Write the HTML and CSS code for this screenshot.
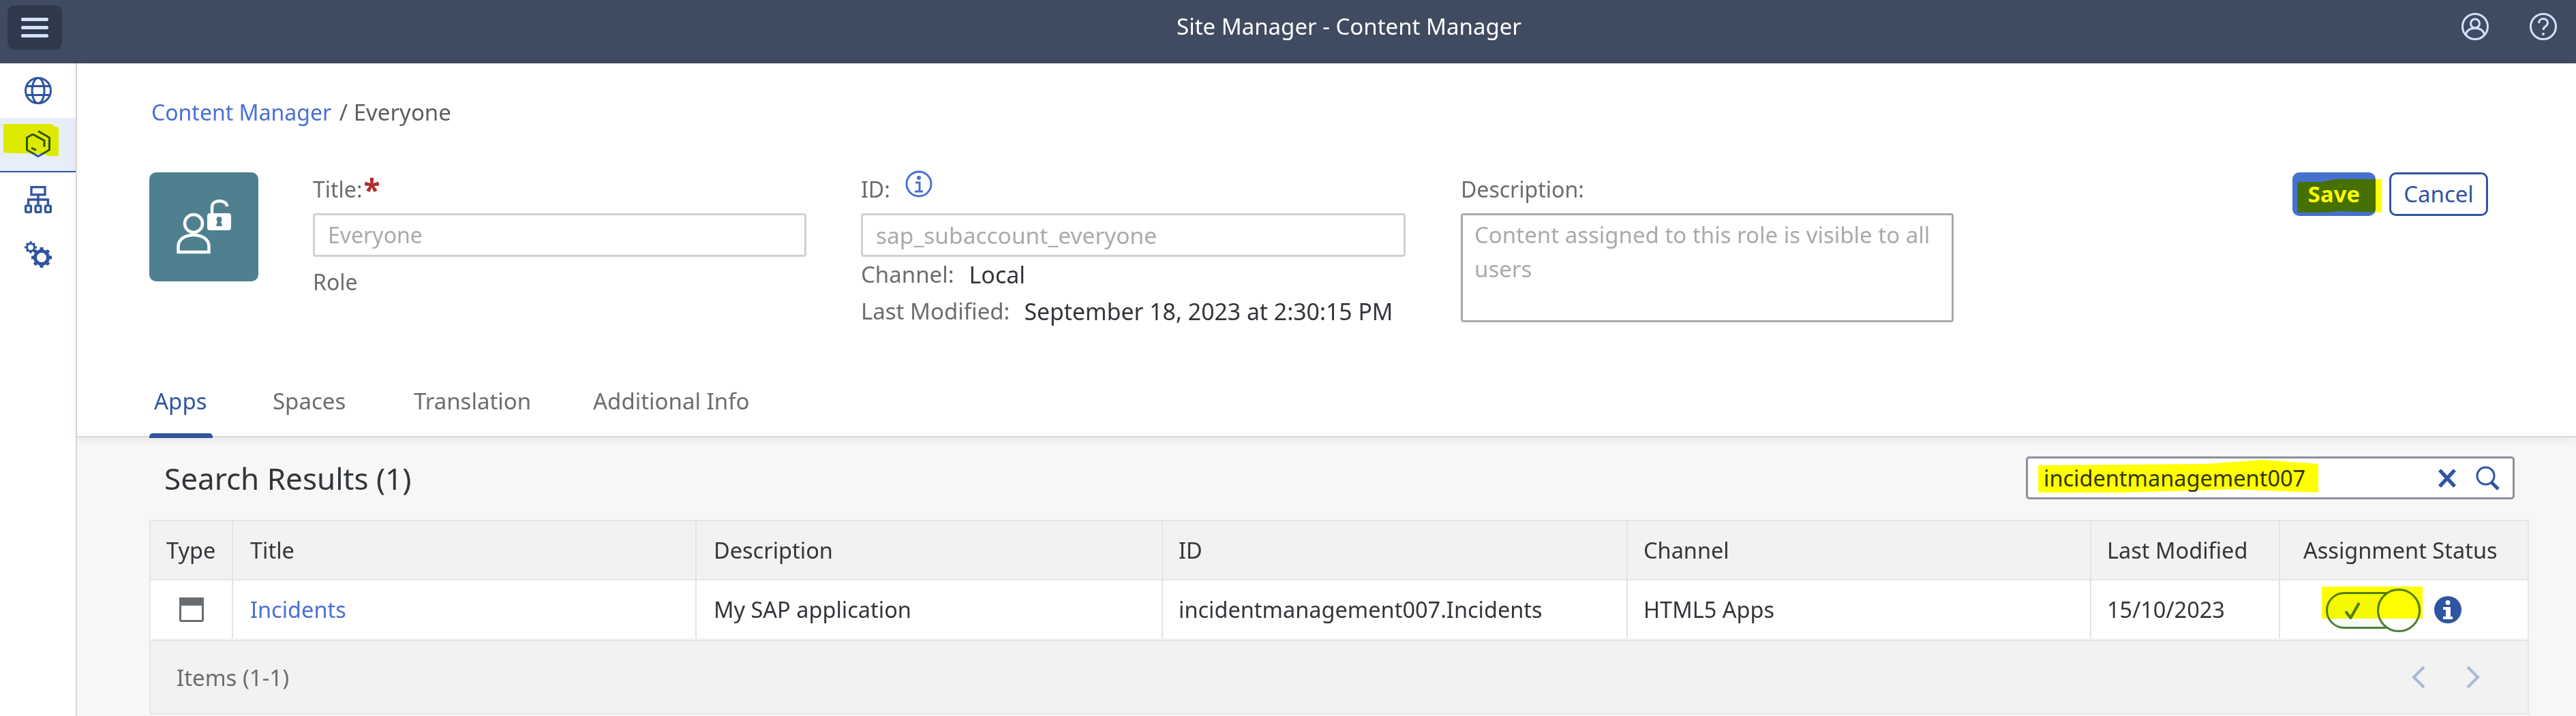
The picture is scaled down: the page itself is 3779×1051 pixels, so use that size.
FILE: index.html
```html
<!DOCTYPE html>
<html lang="en">
<head>
<meta charset="utf-8">
<title>Site Manager - Content Manager</title>
<link rel="stylesheet" href="styles.css">
</head>
<body>
<header class="shell">
  <button class="menu" aria-label="Menu"><span></span><span></span><span></span></button>
  <div class="shell-title">Site Manager - Content Manager</div>
  <div class="shell-actions">
    <svg class="shell-icon" viewBox="0 0 40 40"><circle cx="20" cy="20" r="18.5"/><circle cx="20" cy="15.5" r="6.5"/><path d="M6.5 32c1-6 6-9.5 13.500-9.500S32.500 26 33.500 32"/></svg>
    <svg class="shell-icon" viewBox="0 0 40 40"><circle cx="20" cy="20" r="18.500"/><path d="M13.500 15c0-4 3-6.500 6.500-6.500s6.500 2.500 6.500 6c0 5.500-6.500 5-6.500 10.500"/><circle class="solid" cx="20" cy="31" r="2"/></svg>
  </div>
</header>
<div class="app">
  <nav class="rail">
    <div class="rail-item">
      <svg viewBox="0 0 40 40"><circle cx="20" cy="20" r="18.500"/><ellipse cx="20" cy="20" rx="9" ry="18.500"/><path d="M3 13.500h34M3 26.500h34"/></svg>
    </div>
    <div class="rail-item active">
      <svg viewBox="0 0 36 40"><path d="M18 1.500 34.500 11v18L18 38.500 1.500 29V11L10 6"/><path d="M9 7l17 9.500v9M7 27l7 3.500" transform="translate(1 -1)"/></svg>
      <i class="hl hl-nav"></i>
    </div>
    <div class="rail-item">
      <svg viewBox="0 0 36 36"><rect x="9" y="1.500" width="18" height="10"/><path d="M18 11.500v13M5 24.500v-6.500h26v6.500"/><rect x="1.500" y="26" width="7" height="8.500" rx="1.500"/><rect x="14.500" y="26" width="7" height="8.500" rx="1.500"/><rect x="27.500" y="26" width="7" height="8.500" rx="1.500"/></svg>
    </div>
    <div class="rail-item">
      <svg viewBox="0 0 40 40"><circle cx="9" cy="10" r="5.500"/><path class="thin" d="M9 1v3M9 16v3M0 10h3M15 10h3M3 4l2 2M13 14l2 2M15 4l-2 2M5 14l-2 2"/><circle cx="25" cy="25" r="9.500" class="thick"/><path class="thick" d="M25 10v5M25 35v5M10 25h5M35 25h5M14.500 14.500l3.500 3.500M32 32l3.500 3.500M35.500 14.500 32 18M18 32l-3.500 3.500"/></svg>
    </div>
  </nav>
  <main class="page">
    <section class="head">
      <div class="crumbs"><a class="link">Content Manager</a><span class="crumb-sep"> / Everyone</span></div>
      <div class="form">
        <div class="tile">
          <svg viewBox="0 0 90 90"><circle cx="30" cy="35" r="13" class="ln"/><path class="ln" d="M7.500 77h45v-8c0-11-10-17-22.500-17S7.500 58 7.500 69z"/><rect x="50" y="20" width="35" height="25" rx="4" class="fill"/><path class="ln" d="M57 20V11c0-6 5-9 11-9s11 3 11 8"/><circle cx="67.500" cy="29" r="4" class="key"/><path class="key" d="M65.500 30h4l2.500 9h-9z"/></svg>
        </div>
        <div class="col col-title">
          <div class="label">Title:<span class="req">*</span></div>
          <div class="input">Everyone</div>
          <div class="label role">Role</div>
        </div>
        <div class="col col-id">
          <div class="label">ID:
            <svg class="id-info" viewBox="0 0 40 40"><circle cx="20" cy="20" r="18"/><circle class="solid" cx="20" cy="11" r="3"/><path d="M15 18h6v13M14 31h12"/></svg>
          </div>
          <div class="input id-input">sap_subaccount_everyone</div>
          <div class="label meta">Channel:<span class="value v-channel">Local</span></div>
          <div class="label meta meta2">Last Modified:<span class="value v-mod">September 18, 2023 at 2:30:15 PM</span></div>
        </div>
        <div class="col col-desc">
          <div class="label">Description:</div>
          <div class="textarea">Content assigned to this role is visible to all users</div>
        </div>
        <div class="actions">
          <button class="btn save">Save<i class="hl hl-save"></i></button>
          <button class="btn cancel">Cancel</button>
        </div>
      </div>
      <div class="tabs">
        <div class="tab on">Apps</div>
        <div class="tab">Spaces</div>
        <div class="tab">Translation</div>
        <div class="tab">Additional Info</div>
      </div>
    </section>
    <section class="results">
      <div class="toolbar">
        <h2 class="res-title">Search Results (1)</h2>
        <div class="search">
          <span class="search-text">incidentmanagement007</span>
          <i class="hl hl-search"></i>
          <svg class="s-x" viewBox="0 0 28 28"><path d="M3 2l22 24M25 2 3 26"/></svg>
          <svg class="s-g" viewBox="0 0 36 36"><circle cx="14.500" cy="14.500" r="12.500"/><path class="fat" d="M23 24l10 10"/></svg>
        </div>
      </div>
      <div class="table">
        <div class="th">Type</div><div class="th wide">Title</div><div class="th wide">Description</div><div class="th">ID</div><div class="th">Channel</div><div class="th">Last Modified</div><div class="th ac">Assignment Status</div>
        <div class="td jc"><svg class="app-ic" viewBox="0 0 36 36"><rect x="1.500" y="1.500" width="33" height="33" rx="2"/><rect class="bar" x="1.500" y="1.500" width="33" height="9"/></svg></div>
        <div class="td wide"><a class="link inc">Incidents</a></div>
        <div class="td wide">My SAP application</div>
        <div class="td">incidentmanagement007.Incidents</div>
        <div class="td">HTML5 Apps</div>
        <div class="td">15/10/2023</div>
        <div class="td status">
          <div class="toggle"><svg class="check" viewBox="0 0 24 24"><path d="M2 13l7 9L21 1"/></svg><span class="knob"></span><i class="hl hl-toggle"></i></div>
          <svg class="st-info" viewBox="0 0 40 40"><circle class="bg" cx="20" cy="20" r="20"/><circle class="dot" cx="20" cy="9.500" r="3.500"/><path class="stem" d="M13 16h11v14h3v4H13v-4h4V20h-4z"/></svg>
        </div>
      </div>
      <div class="foot">
        <span class="items">Items (1-1)</span>
        <span class="pager">
          <svg viewBox="0 0 20 34"><path d="M18 2 3 17l15 15"/></svg>
          <svg viewBox="0 0 20 34"><path d="M2 2l15 15L2 32"/></svg>
        </span>
      </div>
    </section>
  </main>
</div>
</body>
</html>
```

FILE: styles.css
```css
* { box-sizing: border-box; }
html, body { margin: 0; height: 1051px; overflow: hidden; background: #fff; }
body { font-family: "Noto Sans", "Open Sans", sans-serif; font-size: 32px; color: #32363a; }
button { font-family: inherit; }

.shell { height: 93px; background: #3f4b60; display: flex; align-items: center; position: relative; padding: 0 28px 0 11px; }
.menu { width: 80px; height: 65px; margin-top: -12px; background: #2f394b; border: 0; border-radius: 10px; display: flex; flex-direction: column; justify-content: center; align-items: center; gap: 7px; padding: 0; }
.menu span { width: 40px; height: 5px; border-radius: 2px; background: #d1e2ff; }
.shell-title { flex: 1; text-align: center; color: #fff; font-size: 33px; line-height: 40px; margin-top: -16px; padding-left: 256px; white-space: nowrap; }
.shell-actions { display: flex; gap: 60px; margin-top: -16px; }
.shell-icon { width: 40px; height: 40px; fill: none; stroke: #d1e2ff; stroke-width: 3; }
.shell-icon .solid { fill: #d1e2ff; stroke: none; }

.app { display: flex; height: 958px; }
.rail { width: 113px; border-right: 2px solid #d9d9d9; flex: none; }
.rail-item { height: 80px; display: flex; align-items: center; justify-content: center; position: relative; }
.rail-item svg { width: 40px; height: 40px; fill: none; stroke: #2f55a0; stroke-width: 3; }
.rail-item .thick { stroke-width: 5; }
.rail-item .thin { stroke-width: 3; }
.rail-item.active { background: #e8eef9; border-bottom: 2px solid #2f55a0; }
.rail-item.active svg { margin-top: -2px; }

.hl { position: absolute; display: block; background: #ff0; mix-blend-mode: multiply; pointer-events: none; }
.hl-nav { left: 5px; top: 9px; width: 81px; height: 47px; background: #f4fa00; clip-path: polygon(0 0, 89% 0, 90% 3px, 100% 5px, 100% 100%, 78% 100%, 78% 94%, 0 90%); }

.page { flex: 1; min-width: 0; display: flex; flex-direction: column; }
.head { height: 549px; border-bottom: 2px solid #d9d9d9; box-shadow: 0 4px 12px rgba(0,0,0,.07); position: relative; z-index: 1; background: #fff; padding: 52px 129px 0 106px; }
.crumbs { line-height: 40px; height: 40px; padding-left: 3px; }
.link { color: #4a6fd4; }
.crumb-sep { color: #5b5e61; font-size: 33px; margin-left: 3px; }

.form { display: flex; margin-top: 68px; height: 220px; }
.tile { width: 160px; height: 160px; flex: none; background: #4f808f; border-radius: 10px; margin-right: 80px; display: flex; align-items: center; justify-content: center; }
.tile svg { width: 90px; height: 90px; margin: 10px 0 0 0; overflow: visible; }
.tile .ln { fill: none; stroke: #fff; stroke-width: 4.500; }
.tile .fill { fill: #fff; }
.tile .key { fill: #4f808f; }

.col { flex: none; padding-top: 5px; }
.col-title { width: 724px; margin-right: 80px; }
.col-id { width: 799px; margin-right: 81px; }
.col-desc { width: 723px; }
.label { color: #6a6d70; line-height: 40px; height: 40px; margin-bottom: 15px; display: flex; align-items: center; white-space: nowrap; }
.req { color: #b22a2a; font-weight: 700; font-size: 44px; line-height: 40px; margin-left: 2px; }
.id-info { width: 40px; height: 40px; margin: -16px 0 0 22px; fill: none; stroke: #4a6fd4; stroke-width: 3; }
.id-info .solid { fill: #4a6fd4; stroke: none; }
.input { height: 64px; border: 3px solid #d0d0d5; border-radius: 4px; color: #aaa; line-height: 58px; padding-left: 19px; }
.id-input { font-size: 33.500px; }
.role { margin-top: 17px; }
.meta { margin: 6px 0 0; font-size: 33px; }
.meta2 { margin-top: 14px; }
.value { color: #32363a; }
.v-channel { margin-left: 22px; font-size: 34px; }
.v-mod { margin-left: 21px; font-size: 33.800px; }
.textarea { height: 160px; border: 3px solid #aaa; border-radius: 4px; color: #aaa; font-size: 33px; line-height: 50px; padding: 4px 17px; }

.actions { margin-left: auto; display: flex; gap: 20px; align-items: flex-start; }
.btn { height: 64px; border-radius: 10px; font-size: 33px; padding: 0; line-height: 58px; position: relative; }
.save { width: 122px; background: #4671d0; border: 0; color: #fff; font-weight: 700; }
.hl-save { left: 7px; top: 10px; width: 124px; height: 49px; clip-path: polygon(0 4px, 30% 4px, 45% 0, 100% 0, 100% 100%, 50% 96%, 35% 100%, 0 100%); }
.cancel { width: 145px; background: #fff; border: 3px solid #2f55a0; color: #2f55a0; font-weight: 400; }

.tabs { display: grid; grid-template-columns: 174px 207px 263px auto; position: absolute; left: 106px; bottom: -3px; }
.tab { justify-self: start; padding: 2px 7px 0; height: 85px; line-height: 58px; color: #6a6d70; border-bottom: 7px solid transparent; font-size: 33px; }
.tab.on { width: 93px; color: #2f55a0; position: relative; }
.tab.on::after { content: ""; position: absolute; left: 0; right: 0; bottom: -7px; height: 7px; background: #2f55a0; border-radius: 5px 5px 0 0; }

.results { flex: 1; background: #f7f7f7; padding: 0 69px 0 106px; }
.toolbar { height: 121px; display: flex; align-items: center; justify-content: space-between; padding: 0 21px 0 22px; }
.res-title { margin: 0; font-size: 44px; font-weight: 400; color: #32363a; margin-top: -2px; }
.search { width: 717px; height: 63px; background: #fff; border: 3px solid #8c8f9c; border-radius: 5px; position: relative; display: flex; align-items: center; margin-top: -2px; font-size: 32.500px; }
.search-text { margin-left: 23px; flex: 1; white-space: nowrap; }
.hl-search { left: 15px; top: 2px; width: 411px; height: 48px; clip-path: polygon(0 8px, 60% 6px, 80% 0, 100% 6px, 100% 100%, 70% 90%, 30% 100%, 0 100%); }
.s-x { width: 28px; height: 28px; margin-right: 28px; fill: none; stroke: #2f55a0; stroke-width: 5.500; }
.s-g { width: 36px; height: 36px; margin-right: 18px; fill: none; stroke: #2f55a0; stroke-width: 3; }
.s-g .fat { stroke-width: 5; }

.table { display: grid; grid-template-columns: 123px 680px 684px 682px 680px 277px 365px; grid-template-rows: 87px 87px; font-size: 32.500px; }
.th, .td { display: flex; align-items: center; padding-left: 23px; border-top: 2px solid #e4e4e4; border-right: 2px solid #e4e4e4; white-space: nowrap; }
.th { background: #f2f2f2; }
.td { background: #fff; }
.wide { padding-left: 25px; }
.th:first-child, .td.jc { border-left: 2px solid #e4e4e4; }
.ac { padding-left: 34px; }
.jc { justify-content: center; padding-left: 0; }
.app-ic { width: 36px; height: 36px; fill: #fff; stroke: #6a6d70; stroke-width: 3; }
.app-ic .bar { fill: #6a6d70; }
.inc { margin-left: 0; }
.status { padding-left: 0; position: relative; }
.toggle { position: relative; width: 139px; height: 54px; margin: 3px 0 0 67px; background: #f5faf5; border: 3px solid #4f7f3a; border-radius: 27px; flex: none; display: flex; align-items: center; }
.check { width: 25px; height: 25px; margin-left: 24px; fill: none; stroke: #4f7f3a; stroke-width: 4; }
.knob { position: absolute; right: -3px; top: -8px; width: 64px; height: 64px; background: #fff; border: 3px solid #4f7f3a; border-radius: 50%; }
.hl-toggle { left: -9px; top: -11px; width: 148px; height: 47px; z-index: 2; }
.st-info { width: 40px; height: 40px; margin-left: 20px; flex: none; }
.st-info .bg { fill: #2f55a0; }
.st-info .dot, .st-info .stem { fill: #fff; }

.foot { height: 110px; margin-top: 2px; background: #f2f2f2; border: 2px solid #e4e4e4; display: flex; align-items: center; justify-content: space-between; padding: 0 70px 0 38px; color: #6a6d70; font-size: 33px; }
.pager { display: flex; gap: 60px; }
.pager svg { width: 20px; height: 34px; fill: none; stroke: #a8b8d8; stroke-width: 4; }
```
